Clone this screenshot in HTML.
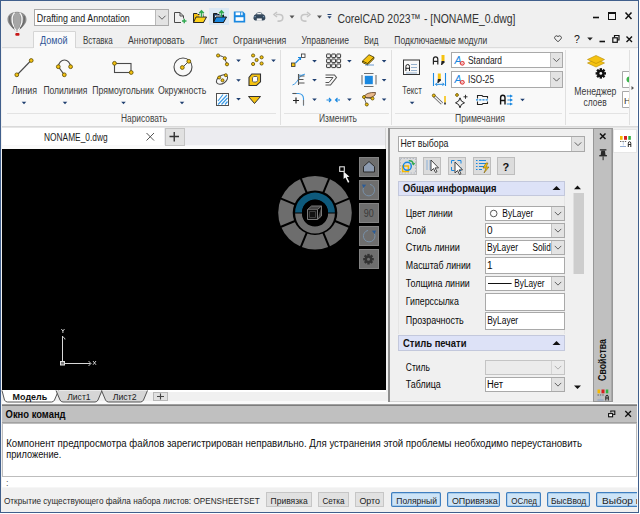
<!DOCTYPE html>
<html><head><meta charset="utf-8"><style>html,body{margin:0;padding:0;width:640px;height:514px;overflow:hidden;background:#fff}svg{display:block}text{font-family:"Liberation Sans",sans-serif}</style></head><body><svg width="640" height="514" viewBox="0 0 640 514" font-family="Liberation Sans, sans-serif"><rect x="0" y="0" width="640" height="514" fill="#ffffff" />
<rect x="0" y="0" width="639" height="513" fill="#f0f0f0" />
<rect x="0.5" y="0.5" width="638" height="512" fill="none" stroke="#405f8c" stroke-width="1"/>
<g><path d="M17 11.8C23.5 11.8 26.8 15.5 26.5 20C26.2 24.5 21 28.5 17.6 31.6H16.4C13 28.5 7.8 24.5 7.5 20C7.2 15.5 10.5 11.8 17 11.8Z" fill="#8c8c8c"/><path d="M17 12.2C20 12.2 21 17 20.6 21C20.3 25 18.6 28.5 17.3 31H16.7C15.4 28.5 13.7 25 13.4 21C13 17 14 12.2 17 12.2Z" fill="#a6a6a6"/><path d="M14.6 12.6C12.2 15 11.8 19 12.4 22.5C13 26 14.8 29 16.2 31" stroke="#fafafa" stroke-width="1.3" fill="none"/><path d="M19.6 12.6C22 15 22.4 19 21.8 22.5C21.2 26 19.4 29 17.8 31" stroke="#fafafa" stroke-width="1.3" fill="none"/><path d="M10 16C9 20 10.5 25 14 28.5" stroke="#6a6a6a" stroke-width="1.4" fill="none"/><path d="M24 16C25 20 23.5 25 20 28.5" stroke="#6a6a6a" stroke-width="1.4" fill="none"/><rect x="15.3" y="33" width="4.2" height="2.8" rx="1" fill="#c81818"/></g>
<rect x="34.5" y="9.5" width="134" height="16" fill="#ffffff" stroke="#a9a9a9" stroke-width="1"/>
<rect x="156" y="10" width="12" height="15" fill="#e3e3e3" />
<line x1="155.5" y1="10" x2="155.5" y2="25" stroke="#b9b9b9" stroke-width="1" />
<path d="M158.5 15.75l3.5 3.5l3.5 -3.5" fill="none" stroke="#606060" stroke-width="1" />
<text x="36.8" y="21.6" font-size="10.6" fill="#1a1a1a" textLength="93" lengthAdjust="spacingAndGlyphs" >Drafting and Annotation</text>
<path d="M174.5 12.5h5.5l3.5 3.5v6.5h-9z" fill="none" stroke="#4a4a4a" stroke-width="1" />
<path d="M180 12.5v3.5h3.5" fill="none" stroke="#4a4a4a" stroke-width="1" />
<rect x="181" y="18.5" width="6" height="5" fill="#f0f0f0" />
<path d="M182 21h4.5M184.25 18.75v4.5" fill="none" stroke="#2fa84f" stroke-width="1.4" />
<path d="M193.5 13.5h3.5l1 1h5.5v8h-10z" fill="#f5c211" stroke="#2a2a2a" stroke-width="1" />
<path d="M193.5 22.5l2.5-5.5h10.5l-3 5.5z" fill="#ffd21a" stroke="#2a2a2a" stroke-width="1" />
<rect x="199.5" y="12" width="4" height="4.5" fill="#f0f0f0" />
<path d="M201.5 17v-5.5M199.2 13.2l2.3-2.4 2.3 2.4" fill="none" stroke="#2fa84f" stroke-width="1.5" />
<rect x="209" y="8" width="20" height="17" fill="#dbe8f4" />
<path d="M213.5 13.5h3.5l1 1h5.5v8h-10z" fill="#1f3f66" stroke="#1a1a1a" stroke-width="1" />
<rect x="215" y="15.5" width="7" height="2" fill="#e8e8e8" />
<path d="M213.5 22.5l2.5-5.5h10.5l-3 5.5z" fill="#1a88e0" stroke="#1a1a1a" stroke-width="1" />
<rect x="219.5" y="12" width="4" height="3" fill="#dbe8f4" />
<path d="M221.5 17v-5.5M219.2 13.2l2.3-2.4 2.3 2.4" fill="none" stroke="#2fa84f" stroke-width="1.5" />
<path d="M233.8 11.5h9.2l2.2 2.2v8.7h-11.4z" fill="#1a88e0" />
<rect x="235.6" y="12.4" width="4.6" height="2.8" fill="#fff" />
<rect x="241.2" y="12.4" width="1.4" height="2.8" fill="#fff" />
<rect x="235.6" y="17.2" width="7.9" height="3.6" fill="#fff" />
<path d="M253.5 17.5q0-3 3-3.2h5.8q3 0.2 3 3.2v0.8q0 2.3-2.3 2.3h-7.2q-2.3 0-2.3-2.3z" fill="#34485c" />
<path d="M255.8 14.6q0.6-2.3 3.5-2.3t3.5 2.3z" fill="#34485c" />
<rect x="257.2" y="12.9" width="4.2" height="1.3" fill="#f4f4f4" />
<rect x="256.8" y="18.4" width="5" height="2.3" fill="#f4f4f4" />
<rect x="254.5" y="16.2" width="1.3" height="1" fill="#8fb0d0" />
<rect x="262.9" y="16.2" width="1.3" height="1" fill="#8fb0d0" />
<path d="M276 14.5h3.5a3.3 3.3 0 0 1 0 6.6h-2" fill="none" stroke="#c6c6c6" stroke-width="1.6" />
<path d="M277 12l-3 2.5 3 2.5" fill="none" stroke="#c6c6c6" stroke-width="1.6" />
<path d="M289.5 15.5h5l-2.5 3z" fill="#555" />
<path d="M308 14.5h-3.5a3.3 3.3 0 0 0 0 6.6h2" fill="none" stroke="#c6c6c6" stroke-width="1.6" />
<path d="M307 12l3 2.5-3 2.5" fill="none" stroke="#c6c6c6" stroke-width="1.6" />
<path d="M317.0 15.5h5l-2.5 3z" fill="#555" />
<line x1="327.5" y1="14.5" x2="331.5" y2="14.5" stroke="#1f3f70" stroke-width="1" />
<path d="M327.5 16.25h4l-2.0 2.5z" fill="#1f3f70" />
<text x="337.5" y="22.5" font-size="12.8" fill="#333" textLength="178" lengthAdjust="spacingAndGlyphs" >CorelCAD 2023™ - [NONAME_0.dwg]</text>
<line x1="593" y1="17.5" x2="599" y2="17.5" stroke="#111" stroke-width="1.6" />
<rect x="608.5" y="12.5" width="7" height="7" fill="none" stroke="#111" stroke-width="1"/>
<line x1="608.5" y1="13.5" x2="615.5" y2="13.5" stroke="#111" stroke-width="1" />
<path d="M625.5 12.5l6 6.5M631.5 12.5l-6 6.5" fill="none" stroke="#111" stroke-width="1.5" />
<rect x="33" y="31" width="43" height="18" fill="#fafafa" />
<path d="M33.5 49V31.5h42V49" fill="none" stroke="#d5d5d5" stroke-width="1" />
<text x="40" y="43.6" font-size="10.4" fill="#2f5597" textLength="27.5" lengthAdjust="spacingAndGlyphs" >Домой</text>
<text x="83" y="43.6" font-size="10.4" fill="#3a3a3a" textLength="29.7" lengthAdjust="spacingAndGlyphs" >Вставка</text>
<text x="128" y="43.6" font-size="10.4" fill="#3a3a3a" textLength="56.6" lengthAdjust="spacingAndGlyphs" >Аннотировать</text>
<text x="199.5" y="43.6" font-size="10.4" fill="#3a3a3a" textLength="18.3" lengthAdjust="spacingAndGlyphs" >Лист</text>
<text x="233" y="43.6" font-size="10.4" fill="#3a3a3a" textLength="53.3" lengthAdjust="spacingAndGlyphs" >Ограничения</text>
<text x="301.5" y="43.6" font-size="10.4" fill="#3a3a3a" textLength="47.5" lengthAdjust="spacingAndGlyphs" >Управление</text>
<text x="364" y="43.6" font-size="10.4" fill="#3a3a3a" textLength="14.5" lengthAdjust="spacingAndGlyphs" >Вид</text>
<text x="394.3" y="43.6" font-size="10.4" fill="#3a3a3a" textLength="93" lengthAdjust="spacingAndGlyphs" >Подключаемые модули</text>
<path d="M558 41.8l-3-3a1.8 1.8 0 0 1 3-2.2 1.8 1.8 0 0 1 3 2.2z" fill="none" stroke="#444" stroke-width="1" />
<text x="574" y="43" font-size="10.5" fill="#111" >?</text>
<path d="M587.25 37.5h5.5l-2.75 3z" fill="#222" />
<line x1="599.5" y1="41.5" x2="605" y2="41.5" stroke="#111" stroke-width="1.6" />
<rect x="612.8" y="37.8" width="4.5" height="4.5" fill="none" stroke="#111" stroke-width="1.2"/>
<path d="M614.5 37.5v-2h4.5v4.5h-1.7" fill="none" stroke="#111" stroke-width="1.2" />
<path d="M626.5 36.5l5.5 5.5M632 36.5l-5.5 5.5" fill="none" stroke="#111" stroke-width="1.4" />
<rect x="2" y="48" width="636" height="78" fill="#f9f9f9" />
<line x1="2" y1="47.7" x2="33" y2="47.7" stroke="#d8d8d8" stroke-width="1" />
<line x1="76" y1="47.7" x2="638" y2="47.7" stroke="#d8d8d8" stroke-width="1" />
<line x1="2" y1="126.5" x2="638" y2="126.5" stroke="#dadada" stroke-width="1" />
<line x1="280.5" y1="50" x2="280.5" y2="125" stroke="#e0e0e0" stroke-width="1" />
<line x1="391.5" y1="50" x2="391.5" y2="125" stroke="#e0e0e0" stroke-width="1" />
<line x1="565.5" y1="50" x2="565.5" y2="125" stroke="#e0e0e0" stroke-width="1" />
<line x1="7" y1="113.5" x2="276" y2="113.5" stroke="#e3e3e3" stroke-width="1" />
<line x1="284" y1="113.5" x2="389" y2="113.5" stroke="#e3e3e3" stroke-width="1" />
<line x1="395" y1="113.5" x2="562" y2="113.5" stroke="#e3e3e3" stroke-width="1" />
<line x1="569" y1="113.5" x2="628" y2="113.5" stroke="#e3e3e3" stroke-width="1" />
<line x1="629.5" y1="50" x2="629.5" y2="125" stroke="#e0e0e0" stroke-width="1" />
<path d="M631.5 86l2.5 2-2.5 2z" fill="#555" />
<line x1="17" y1="75" x2="31" y2="60.5" stroke="#4a4a4a" stroke-width="1.1" />
<circle cx="16.8" cy="74.8" r="1.9" fill="#f5c211" stroke="#5a4a00" stroke-width="0.8"/>
<circle cx="31.2" cy="60.5" r="1.9" fill="#f5c211" stroke="#5a4a00" stroke-width="0.8"/>
<text x="11.7" y="94.1" font-size="10" fill="#3a3a3a" textLength="25.3" lengthAdjust="spacingAndGlyphs" >Линия</text>
<path d="M21.7 101.7h4.6l-2.3 2.6z" fill="#1f3f70" />
<path d="M58.3 66.7 A6.2 7.6 0 0 1 70.6 66.7" fill="none" stroke="#4a4a4a" stroke-width="1.1" />
<line x1="58.3" y1="66.7" x2="64.3" y2="74.8" stroke="#4a4a4a" stroke-width="1.1" />
<circle cx="58.3" cy="66.7" r="1.9" fill="#f5c211" stroke="#5a4a00" stroke-width="0.8"/>
<circle cx="70.6" cy="66.7" r="1.9" fill="#f5c211" stroke="#5a4a00" stroke-width="0.8"/>
<circle cx="64.3" cy="74.8" r="1.9" fill="#f5c211" stroke="#5a4a00" stroke-width="0.8"/>
<text x="43.4" y="94.1" font-size="10" fill="#3a3a3a" textLength="44" lengthAdjust="spacingAndGlyphs" >Полилиния</text>
<path d="M62.7 101.7h4.6l-2.3 2.6z" fill="#1f3f70" />
<rect x="114.5" y="63.5" width="16.5" height="9" fill="none" stroke="#4a4a4a" stroke-width="1.1"/>
<circle cx="114.5" cy="63.3" r="1.9" fill="#f5c211" stroke="#5a4a00" stroke-width="0.8"/>
<circle cx="131.2" cy="72.5" r="1.9" fill="#f5c211" stroke="#5a4a00" stroke-width="0.8"/>
<text x="92.3" y="94.1" font-size="10" fill="#3a3a3a" textLength="61.5" lengthAdjust="spacingAndGlyphs" >Прямоугольник</text>
<path d="M121.2 101.7h4.6l-2.3 2.6z" fill="#1f3f70" />
<circle cx="183" cy="67" r="9" fill="none" stroke="#4a4a4a" stroke-width="1.1"/>
<line x1="182.5" y1="67.5" x2="188.5" y2="61.5" stroke="#4a4a4a" stroke-width="1" />
<circle cx="182.3" cy="67.5" r="1.9" fill="#f5c211" stroke="#5a4a00" stroke-width="0.8"/>
<circle cx="188.8" cy="61.3" r="1.9" fill="#f5c211" stroke="#5a4a00" stroke-width="0.8"/>
<text x="158" y="94.1" font-size="10" fill="#3a3a3a" textLength="48.3" lengthAdjust="spacingAndGlyphs" >Окружность</text>
<path d="M179.7 101.7h4.6l-2.3 2.6z" fill="#1f3f70" />
<text x="121" y="121.6" font-size="10" fill="#444" textLength="46" lengthAdjust="spacingAndGlyphs" >Нарисовать</text>
<path d="M218 55.5 Q224 56 225 59 T227 64.3" fill="none" stroke="#4a4a4a" stroke-width="1" />
<circle cx="218.1" cy="55.5" r="1.6" fill="#f5c211" stroke="#5a4a00" stroke-width="0.8"/>
<circle cx="224.8" cy="58.3" r="1.6" fill="#f5c211" stroke="#5a4a00" stroke-width="0.8"/>
<circle cx="227" cy="64.3" r="1.6" fill="#f5c211" stroke="#5a4a00" stroke-width="0.8"/>
<path d="M236.2 59.5h4.6l-2.3 2.6z" fill="#1f3f70" />
<ellipse cx="222" cy="79.5" rx="6.2" ry="4" transform="rotate(-35 222 79.5)" fill="none" stroke="#4a4a4a" stroke-width="1"/>
<circle cx="219.2" cy="77.5" r="1.5" fill="#f5c211" stroke="#5a4a00" stroke-width="0.8"/>
<circle cx="225.8" cy="75.2" r="1.5" fill="#f5c211" stroke="#5a4a00" stroke-width="0.8"/>
<circle cx="222.5" cy="80.3" r="1.5" fill="#f5c211" stroke="#5a4a00" stroke-width="0.8"/>
<path d="M236.2 79.2h4.6l-2.3 2.6z" fill="#1f3f70" />
<rect x="216.5" y="93.5" width="12" height="12" fill="#fff" stroke="#505050" stroke-width="1"/>
<path d="M218 101l5-6.5M218 104.5l9-9.5M221.5 104.5l6-6.5M225 104.5l2.5-3" fill="none" stroke="#3c9be6" stroke-width="1.2" />
<path d="M236.2 98.0h4.6l-2.3 2.6z" fill="#1f3f70" />
<circle cx="253.1" cy="55.5" r="1.6" fill="#f5c211" stroke="#5a4a00" stroke-width="0.8"/>
<circle cx="261.6" cy="57.3" r="1.6" fill="#f5c211" stroke="#5a4a00" stroke-width="0.8"/>
<circle cx="256.6" cy="60" r="1.6" fill="#f5c211" stroke="#5a4a00" stroke-width="0.8"/>
<circle cx="253.1" cy="64" r="1.6" fill="#f5c211" stroke="#5a4a00" stroke-width="0.8"/>
<circle cx="261.6" cy="63.5" r="1.6" fill="#f5c211" stroke="#5a4a00" stroke-width="0.8"/>
<path d="M271.2 59.5h4.6l-2.3 2.6z" fill="#1f3f70" />
<path d="M251.8 74h8.7v7.8l-4 3.7h-7.5v-8z" fill="#f5c211" stroke="#333" stroke-width="1.1" />
<path d="M252.5 77.8l1.3-1.3h3l0.8 0.8v3.4l-1.3 1.3h-3l-0.8-0.8z" fill="#fff" stroke="#555" stroke-width="0.9" />
<path d="M248.5 96.5h12l-6 7z" fill="#f5c211" stroke="#333" stroke-width="1" />
<rect x="291.5" y="63" width="3.5" height="3.5" fill="#f5c211" stroke="#333" stroke-width="0.8"/>
<rect x="301.5" y="54" width="3.5" height="3.5" fill="#fff" stroke="#333" stroke-width="0.8"/>
<path d="M295.5 63l5-5" fill="none" stroke="#1a88e0" stroke-width="1.1" />
<path d="M298 57.5h2.5v2.5" fill="none" stroke="#1a88e0" stroke-width="1.1" />
<path d="M312.2 59.900000000000006h4.6l-2.3 2.6z" fill="#1f3f70" />
<rect x="326.6" y="54" width="3.8" height="3.6" rx="0.5" fill="#f4f4f4" stroke="#3a3a3a" stroke-width="1"/>
<rect x="326.6" y="59" width="3.8" height="3.6" rx="0.5" fill="#f4f4f4" stroke="#3a3a3a" stroke-width="1"/>
<rect x="326.6" y="64" width="3.8" height="3.6" rx="0.5" fill="#f4f4f4" stroke="#3a3a3a" stroke-width="1"/>
<rect x="331.70000000000005" y="54" width="3.8" height="3.6" rx="0.5" fill="#f4f4f4" stroke="#3a3a3a" stroke-width="1"/>
<rect x="331.70000000000005" y="59" width="3.8" height="3.6" rx="0.5" fill="#f4f4f4" stroke="#3a3a3a" stroke-width="1"/>
<rect x="331.70000000000005" y="64" width="3.8" height="3.6" rx="0.5" fill="#f4f4f4" stroke="#3a3a3a" stroke-width="1"/>
<rect x="336.8" y="54" width="3.8" height="3.6" rx="0.5" fill="#f4f4f4" stroke="#3a3a3a" stroke-width="1"/>
<rect x="336.8" y="59" width="3.8" height="3.6" rx="0.5" fill="#f4f4f4" stroke="#3a3a3a" stroke-width="1"/>
<rect x="336.8" y="64" width="3.8" height="3.6" rx="0.5" fill="#f4f4f4" stroke="#3a3a3a" stroke-width="1"/>
<path d="M347.09999999999997 59.900000000000006h4.6l-2.3 2.6z" fill="#1f3f70" />
<path d="M362.5 61l6.5-6.3 5 2.5v1.5l-6.5 6.3-5-2.5z" fill="#f5c211" stroke="#3a3000" stroke-width="0.8" />
<path d="M362.5 61l5 2.5 6.5-6.3M367.5 63.5v1.5" fill="none" stroke="#3a3000" stroke-width="0.8" />
<line x1="365" y1="65" x2="374" y2="65" stroke="#6a9ad0" stroke-width="1" />
<path d="M381.8 59.900000000000006h4.6l-2.3 2.6z" fill="#1f3f70" />
<path d="M304.5 74.5C298 75.5 298.5 83 292.5 85" fill="none" stroke="#3c9be6" stroke-width="1" />
<path d="M298.5 74v11M298.5 76h6M298.5 79.5h5M298.5 83h6" fill="none" stroke="#555" stroke-width="1.1" />
<path d="M299 75q3 1 6-1" fill="none" stroke="#3c9be6" stroke-width="0.8" />
<path d="M312.2 79.0h4.6l-2.3 2.6z" fill="#1f3f70" />
<path d="M325.5 75h9l2 2.5-6 7.5h-5" fill="none" stroke="#555" stroke-width="1.1" />
<path d="M325.5 77.5h7.5l-4 5h-3.5" fill="none" stroke="#555" stroke-width="1" />
<rect x="364.8" y="75.8" width="8" height="8.4" fill="#1a88e0" />
<path d="M362 75v9.5M376 75v9.5M364 73.5h9.5M364 86.5h9.5" fill="none" stroke="#707070" stroke-width="1.1" />
<path d="M381.8 79.0h4.6l-2.3 2.6z" fill="#1f3f70" />
<path d="M292.5 93.5h6a5 5 0 0 1 5 5v7" fill="none" stroke="#3c9be6" stroke-width="1.1" />
<path d="M292.5 93.5h4" fill="none" stroke="#555" stroke-width="1.1" />
<path d="M303.5 100v5.5" fill="none" stroke="#777" stroke-width="1.1" />
<path d="M293 100.5h6M296 97.5v6" fill="none" stroke="#222" stroke-width="1.2" />
<path d="M312.2 98.5h4.6l-2.3 2.6z" fill="#1f3f70" />
<path d="M326.5 100h4.5M329 98l2 2-2 2M340 100h-4.5M337.5 98l-2 2 2 2" fill="none" stroke="#1a88e0" stroke-width="1.1" />
<path d="M347.09999999999997 98.5h4.6l-2.3 2.6z" fill="#1f3f70" />
<path d="M363.5 97q3-5 12-4.5l-0.5 2.5q-2 3-8 3z" fill="#e8b88a" stroke="#5a3a20" stroke-width="0.8" />
<path d="M364 97l2.5 7.5M364 97l7 1.5" fill="none" stroke="#444" stroke-width="0.8" />
<circle cx="364" cy="97" r="1.5" fill="#f5c211" stroke="#5a4a00" stroke-width="0.8"/>
<circle cx="366.8" cy="104.5" r="1.5" fill="#f5c211" stroke="#5a4a00" stroke-width="0.8"/>
<circle cx="372.5" cy="98.5" r="1.5" fill="#f5c211" stroke="#5a4a00" stroke-width="0.8"/>
<path d="M381.8 98.5h4.6l-2.3 2.6z" fill="#1f3f70" />
<text x="319" y="121.6" font-size="10" fill="#444" textLength="38" lengthAdjust="spacingAndGlyphs" >Изменить</text>
<rect x="403.5" y="60" width="16" height="14.5" fill="#f8f8f8" stroke="#333" stroke-width="1"/>
<path d="M405.9 71v-4.6q0-1.9 1.8-1.9t1.8 1.9v4.6M405.9 68.3h3.6" fill="none" stroke="#222" stroke-width="1" />
<path d="M411 64.5h6M411 67.5h6M411 70.5h6M406 73h11" fill="none" stroke="#8aa8c8" stroke-width="0.9" />
<text x="402.2" y="93.8" font-size="10" fill="#3a3a3a" textLength="19.6" lengthAdjust="spacingAndGlyphs" >Текст</text>
<path d="M409.8 101.7h4.6l-2.3 2.6z" fill="#1f3f70" />
<path d="M433.4 64.5v-5.3q0-2.3 2.2-2.3t2.2 2.3v5.3M433.4 61.3h4.4" fill="none" stroke="#222" stroke-width="1.2" />
<rect x="441.5" y="55" width="3" height="6" fill="#f5c211" />
<path d="M441.5 61h3v1.5l-2.5 2.5h-1z" fill="#222" />
<line x1="433.5" y1="73" x2="433.5" y2="86" stroke="#1a88e0" stroke-width="1.1" />
<line x1="445.5" y1="73" x2="445.5" y2="86" stroke="#1a88e0" stroke-width="1.1" />
<rect x="437.8" y="73.5" width="3" height="5.5" fill="#f5c211" />
<path d="M437.8 79h3v1.5l-2.5 2.5h-1z" fill="#222" />
<path d="M435.5 84.3h8.5M437 82.8l-1.5 1.5 1.5 1.5M442.5 82.8l1.5 1.5-1.5 1.5" fill="none" stroke="#1a88e0" stroke-width="1" />
<rect x="451.5" y="52.5" width="111" height="15" fill="#ffffff" stroke="#a9a9a9" stroke-width="1"/>
<rect x="551" y="53" width="11" height="14" fill="#e3e3e3" />
<line x1="550.5" y1="53" x2="550.5" y2="67" stroke="#c0c0c0" stroke-width="1" />
<path d="M553.25 58.375l3.25 3.25l3.25 -3.25" fill="none" stroke="#606060" stroke-width="1" />
<text x="454.5" y="64" font-size="10.5" font-style="italic" fill="#1a88e0">A</text>
<circle cx="462.3" cy="63.3" r="2.4" fill="#e04040"/>
<circle cx="462.3" cy="63.3" r="1.2" fill="#fff"/>
<line x1="461.4" y1="64.2" x2="463.2" y2="62.4" stroke="#e04040" stroke-width="0.7" />
<text x="468" y="64.1" font-size="10.3" fill="#222" textLength="34" lengthAdjust="spacingAndGlyphs" >Standard</text>
<rect x="451.5" y="71.5" width="111" height="16" fill="#ffffff" stroke="#a9a9a9" stroke-width="1"/>
<rect x="551" y="72" width="11" height="15" fill="#e3e3e3" />
<line x1="550.5" y1="72" x2="550.5" y2="87" stroke="#c0c0c0" stroke-width="1" />
<path d="M553.25 77.875l3.25 3.25l3.25 -3.25" fill="none" stroke="#606060" stroke-width="1" />
<text x="454.5" y="83" font-size="10.5" font-style="italic" fill="#1a88e0">A</text>
<circle cx="462.3" cy="82.3" r="2.4" fill="#e04040"/>
<circle cx="462.3" cy="82.3" r="1.2" fill="#fff"/>
<line x1="461.4" y1="83.2" x2="463.2" y2="81.4" stroke="#e04040" stroke-width="0.7" />
<text x="468" y="83.1" font-size="10.3" fill="#222" textLength="26" lengthAdjust="spacingAndGlyphs" >ISO-25</text>
<path d="M434 96l8 7.5" fill="none" stroke="#555" stroke-width="3" />
<path d="M434 96l8 7.5" fill="none" stroke="#f4f4f4" stroke-width="1.6" />
<circle cx="433.8" cy="95.5" r="1.5" fill="#f5c211" stroke="#5a4a00" stroke-width="0.8"/>
<rect x="444.2" y="96" width="1.6" height="6.5" fill="#f5c211" />
<rect x="444.2" y="102.5" width="1.6" height="2" fill="#222" />
<circle cx="457" cy="95" r="1.4" fill="#f5c211" stroke="#5a4a00" stroke-width="0.8"/>
<path d="M460 97.8q0.5 4 4.5 5-4 1-4.5 5-0.5-4-4.5-5 4-1 4.5-5z" fill="none" stroke="#222" stroke-width="1" />
<path d="M465.5 94.8v4M463.5 96.8h4" fill="none" stroke="#222" stroke-width="0.9" />
<path d="M477.5 98.5v-3h4.5l1 1h4.5v2M477.5 101.5v3h4.5l1-1h4.5v-2" fill="none" stroke="#222" stroke-width="1.1" />
<path d="M476 99.8h12" fill="none" stroke="#1a88e0" stroke-width="1.2" stroke-dasharray="2.2 1"/>
<path d="M500.6 104.5v-6.8q0-2.5 2.2-2.5t2.2 2.5v6.8M500.6 100.5h4.4" fill="none" stroke="#111" stroke-width="1.4" />
<path d="M506.8 96h3.2M507.5 100h2.5M506.8 104h3.2" fill="none" stroke="#1a88e0" stroke-width="1.2" />
<path d="M510 94.6l3 1.4-3 1.8zM510 98.3l3 1.7-3 1.7zM510 102.4l3 1.6-3 1.6z" fill="#1a88e0" />
<path d="M520.2 98.7h4.6l-2.3 2.6z" fill="#1f3f70" />
<text x="455" y="121.6" font-size="10" fill="#444" textLength="50" lengthAdjust="spacingAndGlyphs" >Примечания</text>
<path d="M587.5 63l8.5-4 8.5 4-8.5 4z" fill="#f5c211" stroke="#b58a00" stroke-width="0.6" />
<path d="M587.5 59.5l8.5-4 8.5 4-8.5 4z" fill="#f5c211" stroke="#b58a00" stroke-width="0.6" />
<g transform="translate(600.8 73.4)"><circle r="3.7" fill="#111"/><circle r="1.4" fill="#f9f9f9"/><rect x="-1.2" y="-5.2" width="2.4" height="2.6" fill="#111" transform="rotate(0)"/><rect x="-1.2" y="-5.2" width="2.4" height="2.6" fill="#111" transform="rotate(45)"/><rect x="-1.2" y="-5.2" width="2.4" height="2.6" fill="#111" transform="rotate(90)"/><rect x="-1.2" y="-5.2" width="2.4" height="2.6" fill="#111" transform="rotate(135)"/><rect x="-1.2" y="-5.2" width="2.4" height="2.6" fill="#111" transform="rotate(180)"/><rect x="-1.2" y="-5.2" width="2.4" height="2.6" fill="#111" transform="rotate(225)"/><rect x="-1.2" y="-5.2" width="2.4" height="2.6" fill="#111" transform="rotate(270)"/><rect x="-1.2" y="-5.2" width="2.4" height="2.6" fill="#111" transform="rotate(315)"/></g>
<text x="574.3" y="94.7" font-size="10" fill="#3a3a3a" textLength="42" lengthAdjust="spacingAndGlyphs" >Менеджер</text>
<text x="583.6" y="105.5" font-size="10" fill="#3a3a3a" textLength="23" lengthAdjust="spacingAndGlyphs" >слоев</text>
<path d="M629 71.5h-6.5v16h6.5" fill="#fff" stroke="#a9a9a9" stroke-width="1" />
<circle cx="629.5" cy="79.5" r="3" fill="#3cb44b"/>
<path d="M629 91.5h-6.5v16h6.5" fill="#fff" stroke="#a9a9a9" stroke-width="1" />
<text x="624" y="103.5" font-size="9" fill="#333" >Н</text>
<rect x="629.6" y="49" width="8.4" height="77" fill="#f9f9f9" />
<line x1="629.5" y1="50" x2="629.5" y2="125" stroke="#e0e0e0" stroke-width="1" />
<path d="M631.5 86l2.5 2-2.5 2z" fill="#555" />
<line x1="637.5" y1="48" x2="637.5" y2="126" stroke="#ffffff" stroke-width="1" />
<rect x="2" y="127" width="636" height="1.5" fill="#e6e6e6" />
<rect x="2" y="128" width="384" height="21" fill="#ececf0" />
<rect x="2" y="128" width="162" height="17.5" fill="#ffffff" />
<rect x="2" y="145.3" width="384" height="3.7" fill="#fbfbfb" />
<text x="44" y="140.8" font-size="10.4" fill="#1a1a1a" textLength="63.6" lengthAdjust="spacingAndGlyphs" >NONAME_0.dwg</text>
<path d="M146.5 133l7.5 7.5M154 133l-7.5 7.5" fill="none" stroke="#555" stroke-width="1" />
<rect x="165.5" y="128.5" width="19" height="17" fill="#e1e1e1" stroke="#c4c4c4" stroke-width="1"/>
<path d="M169.5 136.5h9.5M174.25 132v9.5" fill="none" stroke="#333" stroke-width="1.4" />
<line x1="385.5" y1="128" x2="385.5" y2="149" stroke="#d6d6d6" stroke-width="1" />
<rect x="2" y="149" width="384" height="241" fill="#000000" />
<circle cx="315" cy="212.7" r="36.8" fill="#6d6d6d"/>
<circle cx="315" cy="212.7" r="22.3" fill="#000"/>
<line x1="323.04" y1="193.3" x2="329.54" y2="177.59" stroke="#000" stroke-width="2" />
<line x1="334.4" y1="204.66" x2="350.11" y2="198.16" stroke="#000" stroke-width="2" />
<line x1="334.4" y1="220.74" x2="350.11" y2="227.24" stroke="#000" stroke-width="2" />
<line x1="323.04" y1="232.1" x2="329.54" y2="247.81" stroke="#000" stroke-width="2" />
<line x1="306.96" y1="232.1" x2="300.46" y2="247.81" stroke="#000" stroke-width="2" />
<line x1="295.6" y1="220.74" x2="279.89" y2="227.24" stroke="#000" stroke-width="2" />
<line x1="295.6" y1="204.66" x2="279.89" y2="198.16" stroke="#000" stroke-width="2" />
<line x1="306.96" y1="193.3" x2="300.46" y2="177.59" stroke="#000" stroke-width="2" />
<path d="M295.1 212.5 A19.9 19.9 0 0 1 334.9 212.5 L328 212.5 A13 13 0 0 0 302 212.5 Z" fill="#0e5a7c"/>
<path d="M295.1 213.6 A19.9 19.9 0 0 0 334.9 213.6 L328 213.6 A13 13 0 0 1 302 213.6 Z" fill="#6d6d6d"/>
<circle cx="315" cy="212.7" r="13" fill="#000"/>
<path d="M307.5 209.5h10v10h-10z" fill="#111" stroke="#7a7a7a" stroke-width="1" />
<path d="M307.5 209.5l4-3.5h10l-4 3.5M317.5 219.5l4-3.5v-10" fill="#444" stroke="#7a7a7a" stroke-width="1" />
<path d="M309.5 211.5h6v6h-6z" fill="#111" stroke="#4a4a4a" stroke-width="0.8" />
<rect x="339.7" y="166.8" width="4.6" height="4.6" fill="none" stroke="#e0e0e0" stroke-width="1.1"/>
<path d="M343.6 171.5v7.5l1.8-1.6 2.6 5.3 1.4-0.7-2.5-5.1 2.6-0.2z" fill="#f4f4f4" />
<rect x="359.5" y="157.5" width="19" height="19" fill="#6e6e6e" stroke="#838383" stroke-width="1"/>
<rect x="359.5" y="180.5" width="19" height="19" fill="#6e6e6e" stroke="#838383" stroke-width="1"/>
<rect x="359.5" y="203.5" width="19" height="19" fill="#6e6e6e" stroke="#838383" stroke-width="1"/>
<rect x="359.5" y="226.5" width="19" height="19" fill="#6e6e6e" stroke="#838383" stroke-width="1"/>
<rect x="359.5" y="249.5" width="19" height="19" fill="#6e6e6e" stroke="#838383" stroke-width="1"/>
<path d="M363.5 166.5l5.5-5 5.5 5v5.5h-11z" fill="#8d9bb0" stroke="#2a2a2a" stroke-width="1" />
<path d="M363.6 187.5A5.8 5.8 0 1 0 370 184.4" fill="none" stroke="#7890a8" stroke-width="1" />
<path d="M362 184.5l4.2 0.3-2.8 3.2z" fill="#2a5c98" />
<text x="363.7" y="216.6" font-size="10" fill="#3a3a3a" textLength="10" lengthAdjust="spacingAndGlyphs" >90</text>
<path d="M374.4 233.5A5.8 5.8 0 1 1 368 230.4" fill="none" stroke="#7890a8" stroke-width="1" />
<path d="M376 230.5l-4.2 0.3 2.8 3.2z" fill="#2a5c98" />
<g transform="translate(368.5 259.2)"><circle r="3.7" fill="#333"/><circle r="1.5" fill="#6e6e6e"/><rect x="-1.2" y="-5.3" width="2.4" height="2.6" fill="#333" transform="rotate(0)"/><rect x="-1.2" y="-5.3" width="2.4" height="2.6" fill="#333" transform="rotate(45)"/><rect x="-1.2" y="-5.3" width="2.4" height="2.6" fill="#333" transform="rotate(90)"/><rect x="-1.2" y="-5.3" width="2.4" height="2.6" fill="#333" transform="rotate(135)"/><rect x="-1.2" y="-5.3" width="2.4" height="2.6" fill="#333" transform="rotate(180)"/><rect x="-1.2" y="-5.3" width="2.4" height="2.6" fill="#333" transform="rotate(225)"/><rect x="-1.2" y="-5.3" width="2.4" height="2.6" fill="#333" transform="rotate(270)"/><rect x="-1.2" y="-5.3" width="2.4" height="2.6" fill="#333" transform="rotate(315)"/></g>
<path d="M62.5 336v27.5h28" fill="none" stroke="#d8d8d8" stroke-width="1" />
<rect x="60.5" y="361.5" width="4" height="3.5" fill="#777" stroke="#e0e0e0" stroke-width="1"/>
<path d="M62.5 336.5l2 1.5 0.5 1.5M88.5 361l2.5 2.5-2.5 2.5" fill="none" stroke="#d8d8d8" stroke-width="0.9" />
<path d="M61.3 329l1.6 2 1.6-2M62.9 331v2" fill="none" stroke="#e0e0e0" stroke-width="0.9" />
<path d="M93 361l3 3.8M96 361l-3 3.8" fill="none" stroke="#e0e0e0" stroke-width="0.9" />
<rect x="2" y="390" width="384" height="2" fill="#ffffff" />
<rect x="2" y="392" width="384" height="9" fill="#f0f0f0" />
<rect x="2" y="401" width="636" height="3.5" fill="#fafafa" />
<path d="M58.5 390.5l-4 9.5q-1 2-3 2h-44q-2 0-3-2l-2.5-9.5" fill="#fff" stroke="#444" stroke-width="0.9" />
<text x="12.6" y="399.8" font-size="9.2" fill="#111" font-weight="bold" textLength="34.6" lengthAdjust="spacingAndGlyphs" >Модель</text>
<path d="M56 390.5l4 9.5q1 2 3 2h32q2 0 3-2l4-9.5" fill="#d6d6d6" stroke="#444" stroke-width="0.9" />
<text x="67.2" y="399.8" font-size="9.2" fill="#222" textLength="23.4" lengthAdjust="spacingAndGlyphs" >Лист1</text>
<path d="M101.5 390.5l4 9.5q1 2 3 2h32q2 0 3-2l4-9.5" fill="#d6d6d6" stroke="#444" stroke-width="0.9" />
<text x="112.7" y="399.8" font-size="9.2" fill="#222" textLength="23.9" lengthAdjust="spacingAndGlyphs" >Лист2</text>
<rect x="153.5" y="392.5" width="14" height="8" fill="#e1e1e1" stroke="#b8b8b8" stroke-width="1"/>
<path d="M157 396.5h7M160.5 393.5v6" fill="none" stroke="#444" stroke-width="1.1" />
<rect x="386" y="128" width="2" height="273" fill="#f0f0f0" />
<rect x="388" y="128" width="2" height="274" fill="#8e8e8e" />
<rect x="390" y="128" width="203.5" height="273" fill="#f0f0f0" />
<line x1="390" y1="401.5" x2="593" y2="401.5" stroke="#d4d4d4" stroke-width="1" />
<line x1="390" y1="128.5" x2="593" y2="128.5" stroke="#a8a8a8" stroke-width="1" />
<rect x="398.5" y="136.5" width="186" height="15" fill="#ffffff" stroke="#a9a9a9" stroke-width="1"/>
<rect x="572" y="137" width="12" height="14" fill="#e3e3e3" />
<line x1="571.5" y1="137" x2="571.5" y2="151" stroke="#c0c0c0" stroke-width="1" />
<path d="M574.75 142.375l3.25 3.25l3.25 -3.25" fill="none" stroke="#606060" stroke-width="1" />
<text x="400.5" y="147.4" font-size="10.3" fill="#1a1a1a" textLength="48" lengthAdjust="spacingAndGlyphs" >Нет выбора</text>
<rect x="399.5" y="157.5" width="17" height="17" fill="#dcdcdc" stroke="#bdbdbd" stroke-width="1"/>
<rect x="423.5" y="157.5" width="17" height="17" fill="#dcdcdc" stroke="#bdbdbd" stroke-width="1"/>
<rect x="448.5" y="157.5" width="17" height="17" fill="#dcdcdc" stroke="#bdbdbd" stroke-width="1"/>
<rect x="473.5" y="157.5" width="17" height="17" fill="#dcdcdc" stroke="#bdbdbd" stroke-width="1"/>
<rect x="497.5" y="157.5" width="17" height="17" fill="#dcdcdc" stroke="#bdbdbd" stroke-width="1"/>
<rect x="400.5" y="158.5" width="15" height="14.5" fill="none" stroke="#a8b0c0" stroke-width="0.8" stroke-dasharray="1.5 1.5"/>
<rect x="402.6" y="166" width="5.8" height="5.5" fill="none" stroke="#f5b800" stroke-width="1.5"/>
<circle cx="407.3" cy="166.3" r="4" fill="none" stroke="#1a88e0" stroke-width="1.5"/>
<path d="M408.8 160.8q3.5-0.5 4.5 2.8" fill="none" stroke="#2fa84f" stroke-width="1.5" />
<path d="M411.3 163.3l2.2 2.2 2-2.6z" fill="#2fa84f" />
<path d="M427 160v10M430 160v10" fill="none" stroke="#8ab0d8" stroke-width="1" />
<path d="M431 160v11l2.5-2.5 2 4 1.5-.8-2-3.8h3.5z" fill="#fff" stroke="#333" stroke-width="0.9" />
<path d="M451.5 160.5h3M457.5 160.5h3.5v3M451.5 160.5v3M451.5 167v3.5h3M458 170.5h3v-3" fill="none" stroke="#1a88e0" stroke-width="1" />
<path d="M455 162v11l2.5-2.5 2 4 1.5-.8-2-3.8h3.5z" fill="#fff" stroke="#333" stroke-width="0.9" />
<path d="M476 160.5h1.5M479 160.5h7M476 163.5h1.5M479 163.5h7M476 166.5h1.5M479 166.5h5M476 169.5h1.5M479 169.5h3" fill="none" stroke="#1a88e0" stroke-width="1" />
<path d="M486 163l-3 5h3l-2 5 5-6h-3l2-4z" fill="#f5c211" stroke="#6a5000" stroke-width="0.5" />
<text x="502.5" y="170.5" font-size="11" fill="#111" font-weight="bold" >?</text>
<rect x="398.5" y="181.5" width="166" height="14" fill="#dde2f7" stroke="#c3c8dc" stroke-width="1"/>
<text x="403" y="191.6" font-size="10.3" fill="#111" font-weight="bold" textLength="93.5" lengthAdjust="spacingAndGlyphs" >Общая информация</text>
<path d="M552.5 190h8l-4-4z" fill="#111" />
<rect x="398" y="196" width="167" height="138" fill="#f0f0f0" />
<line x1="398.5" y1="196" x2="398.5" y2="334" stroke="#e4e4e4" stroke-width="1" />
<line x1="564.5" y1="196" x2="564.5" y2="334" stroke="#e4e4e4" stroke-width="1" />
<text x="405.8" y="216.8" font-size="10" fill="#0a0a0a" textLength="47" lengthAdjust="spacingAndGlyphs" >Цвет линии</text>
<rect x="485.5" y="206.5" width="79" height="14" fill="#ffffff" stroke="#a9a9a9" stroke-width="1"/>
<rect x="552" y="207" width="12" height="13" fill="#e3e3e3" />
<line x1="551.5" y1="207" x2="551.5" y2="220" stroke="#c0c0c0" stroke-width="1" />
<path d="M554.75 211.875l3.25 3.25l3.25 -3.25" fill="none" stroke="#606060" stroke-width="1" />
<circle cx="493.7" cy="213.5" r="3.3" fill="#fff" stroke="#444" stroke-width="0.9"/>
<text x="502.3" y="216.8" font-size="10" fill="#0a0a0a" textLength="31" lengthAdjust="spacingAndGlyphs" >ByLayer</text>
<text x="405.8" y="233.8" font-size="10" fill="#0a0a0a" textLength="20" lengthAdjust="spacingAndGlyphs" >Слой</text>
<rect x="485.5" y="223.5" width="79" height="14" fill="#ffffff" stroke="#a9a9a9" stroke-width="1"/>
<rect x="552" y="224" width="12" height="13" fill="#e3e3e3" />
<line x1="551.5" y1="224" x2="551.5" y2="237" stroke="#c0c0c0" stroke-width="1" />
<path d="M554.75 228.875l3.25 3.25l3.25 -3.25" fill="none" stroke="#606060" stroke-width="1" />
<text x="487" y="233.8" font-size="10" fill="#0a0a0a" >0</text>
<text x="405.8" y="250.8" font-size="10" fill="#0a0a0a" textLength="54" lengthAdjust="spacingAndGlyphs" >Стиль линии</text>
<rect x="485.5" y="240.5" width="79" height="14" fill="#ffffff" stroke="#a9a9a9" stroke-width="1"/>
<rect x="552" y="241" width="12" height="13" fill="#e3e3e3" />
<line x1="551.5" y1="241" x2="551.5" y2="254" stroke="#c0c0c0" stroke-width="1" />
<path d="M554.75 245.875l3.25 3.25l3.25 -3.25" fill="none" stroke="#606060" stroke-width="1" />
<text x="487" y="250.8" font-size="10" fill="#0a0a0a" textLength="31" lengthAdjust="spacingAndGlyphs" >ByLayer</text>
<text x="532.4" y="250.8" font-size="10" fill="#0a0a0a" textLength="18.4" lengthAdjust="spacingAndGlyphs" >Solid</text>
<text x="405.8" y="268.8" font-size="10" fill="#0a0a0a" textLength="65" lengthAdjust="spacingAndGlyphs" >Масштаб линии</text>
<rect x="485.5" y="257.5" width="79" height="16" fill="#ffffff" stroke="#a9a9a9" stroke-width="1"/>
<text x="487" y="268.8" font-size="10" fill="#0a0a0a" >1</text>
<text x="405.8" y="286.8" font-size="10" fill="#0a0a0a" textLength="64" lengthAdjust="spacingAndGlyphs" >Толщина линии</text>
<rect x="485.5" y="276.5" width="79" height="14" fill="#ffffff" stroke="#a9a9a9" stroke-width="1"/>
<rect x="552" y="277" width="12" height="13" fill="#e3e3e3" />
<line x1="551.5" y1="277" x2="551.5" y2="290" stroke="#c0c0c0" stroke-width="1" />
<path d="M554.75 281.875l3.25 3.25l3.25 -3.25" fill="none" stroke="#606060" stroke-width="1" />
<line x1="488" y1="283.5" x2="511.6" y2="283.5" stroke="#111" stroke-width="1" />
<text x="514.3" y="286.8" font-size="10" fill="#0a0a0a" textLength="30.3" lengthAdjust="spacingAndGlyphs" >ByLayer</text>
<text x="405.8" y="304.8" font-size="10" fill="#0a0a0a" textLength="53" lengthAdjust="spacingAndGlyphs" >Гиперссылка</text>
<rect x="485.5" y="293.5" width="79" height="17" fill="#ffffff" stroke="#a9a9a9" stroke-width="1"/>
<text x="405.8" y="323.8" font-size="10" fill="#0a0a0a" textLength="58" lengthAdjust="spacingAndGlyphs" >Прозрачность</text>
<rect x="485.5" y="312.5" width="79" height="17" fill="#ffffff" stroke="#a9a9a9" stroke-width="1"/>
<text x="487.2" y="323.8" font-size="10" fill="#0a0a0a" textLength="31" lengthAdjust="spacingAndGlyphs" >ByLayer</text>
<rect x="398.5" y="335.5" width="166" height="15" fill="#dde2f7" stroke="#c3c8dc" stroke-width="1"/>
<text x="403" y="346.6" font-size="10.3" fill="#111" font-weight="bold" textLength="63.5" lengthAdjust="spacingAndGlyphs" >Стиль печати</text>
<path d="M552.5 345h8l-4-4z" fill="#111" />
<text x="405.8" y="371" font-size="10" fill="#0a0a0a" textLength="24" lengthAdjust="spacingAndGlyphs" >Стиль</text>
<rect x="485.5" y="360.5" width="79" height="14" fill="#ebebeb" stroke="#c4c4c4" stroke-width="1"/>
<path d="M554.75 365.875l3.25 3.25l3.25 -3.25" fill="none" stroke="#b0b0b0" stroke-width="1" />
<line x1="551.5" y1="361" x2="551.5" y2="374" stroke="#d4d4d4" stroke-width="1" />
<text x="405.8" y="387.5" font-size="10" fill="#0a0a0a" textLength="35" lengthAdjust="spacingAndGlyphs" >Таблица</text>
<rect x="485.5" y="377.5" width="79" height="14" fill="#ffffff" stroke="#a9a9a9" stroke-width="1"/>
<rect x="552" y="378" width="12" height="13" fill="#e3e3e3" />
<line x1="551.5" y1="378" x2="551.5" y2="391" stroke="#c0c0c0" stroke-width="1" />
<path d="M554.75 382.875l3.25 3.25l3.25 -3.25" fill="none" stroke="#606060" stroke-width="1" />
<text x="487" y="388" font-size="10" fill="#0a0a0a" textLength="16" lengthAdjust="spacingAndGlyphs" >Нет</text>
<path d="M574 189.3h7l-3.5-3.8z" fill="#111" />
<rect x="573.5" y="193" width="10.5" height="81" fill="#cdcdcd" />
<path d="M574 385.5h7l-3.5 3.5z" fill="#111" />
<rect x="593.5" y="128.5" width="19" height="273" fill="#c0c0c0" stroke="#979797" stroke-width="1"/>
<line x1="611.5" y1="129" x2="611.5" y2="401" stroke="#a8a8a8" stroke-width="1" />
<path d="M600 133.5l5.5 5.5M605.5 133.5l-5.5 5.5" fill="none" stroke="#111" stroke-width="1.5" />
<rect x="599.8" y="149.2" width="6.6" height="1.3" fill="#2a2a2a" />
<path d="M601.3 150.5h3.6l0.6 4.5h-4.8z" fill="#2a2a2a" />
<rect x="599.3" y="155" width="7.6" height="1.4" fill="#2a2a2a" />
<rect x="602.6" y="156.4" width="1" height="3.8" fill="#2a2a2a" />
<text x="0" y="0" font-size="10" font-weight="bold" fill="#111" textLength="42" lengthAdjust="spacingAndGlyphs" transform="translate(606.3 381) rotate(-90)">Свойства</text>
<rect x="597.5" y="389.5" width="2.6" height="3.8" fill="#f5b800" />
<rect x="601.5" y="389.5" width="3" height="3.8" fill="#d42020" />
<rect x="605.8" y="389.5" width="2.5" height="3.8" fill="#30b040" />
<path d="M597.5 395.0h1.4M599.9 395.0h1.4M602.3 395.0h1.4" fill="none" stroke="#444" stroke-width="0.8" />
<path d="M600.8 395.5v3.5" fill="none" stroke="#9ab8e0" stroke-width="0.6" />
<line x1="597.5" y1="400.0" x2="603.5" y2="400.0" stroke="#7a98c8" stroke-width="0.8" />
<path d="M605.8 400.5v-3.5q0-1.8 1.25-1.8t1.25 1.8v3.5M605.8 398.0h2.5" fill="none" stroke="#111" stroke-width="0.9" />
<rect x="613" y="128" width="25" height="275" fill="#f0f0f0" />
<rect x="613.5" y="129.5" width="23" height="23" fill="#ffffff" stroke="#e6e6e6" stroke-width="1"/>
<rect x="620" y="136" width="2.6" height="3.8" fill="#f5b800" />
<rect x="624" y="136" width="3" height="3.8" fill="#d42020" />
<rect x="628.3" y="136" width="2.5" height="3.8" fill="#30b040" />
<path d="M620 141.5h1.4M622.4 141.5h1.4M624.8 141.5h1.4" fill="none" stroke="#444" stroke-width="0.8" />
<path d="M623.3 142v3.5" fill="none" stroke="#9ab8e0" stroke-width="0.6" />
<line x1="620" y1="146.5" x2="626" y2="146.5" stroke="#7a98c8" stroke-width="0.8" />
<path d="M628.3 147v-3.5q0-1.8 1.25-1.8t1.25 1.8v3.5M628.3 144.5h2.5" fill="none" stroke="#111" stroke-width="0.9" />
<rect x="2" y="404.3" width="635" height="1.7" fill="#7c7c7c" />
<rect x="2" y="406" width="635" height="16" fill="#c0c0c0" />
<rect x="2" y="422" width="635" height="1.4" fill="#a2a2a2" />
<text x="5.6" y="418" font-size="10" fill="#0a0a0a" font-weight="bold" textLength="60" lengthAdjust="spacingAndGlyphs" >Окно команд</text>
<path d="M610.8 412.6v-1.6h4v3.5h-1.6" fill="none" stroke="#111" stroke-width="1.1" />
<rect x="608.6" y="413.6" width="4" height="3.2" fill="#fff" stroke="#111" stroke-width="1.1"/>
<path d="M625.3 411l5.7 5.7M631 411l-5.7 5.7" fill="none" stroke="#111" stroke-width="1.3" />
<rect x="2.5" y="423.5" width="634" height="53" fill="#ffffff" stroke="#bdbdbd" stroke-width="1"/>
<rect x="637" y="404" width="1" height="84" fill="#fafafa" />
<text x="6.25" y="447" font-size="10" fill="#111" textLength="575.8" lengthAdjust="spacingAndGlyphs" >Компонент предпросмотра файлов зарегистрирован неправильно. Для устранения этой проблемы необходимо переустановить</text>
<text x="6.25" y="457.6" font-size="10" fill="#111" textLength="55" lengthAdjust="spacingAndGlyphs" >приложение.</text>
<rect x="2" y="477" width="636" height="10.5" fill="#ffffff" />
<text x="6" y="486" font-size="9" fill="#555" >:</text>
<rect x="1" y="488" width="637" height="24" fill="#f0f0f0" />
<line x1="2" y1="487.5" x2="637" y2="487.5" stroke="#f6f6f6" stroke-width="1" />
<text x="4" y="504" font-size="9.4" fill="#2a2a2a" textLength="255.8" lengthAdjust="spacingAndGlyphs" >Открытие существующего файла набора листов: OPENSHEETSET</text>
<rect x="266.5" y="492.5" width="45" height="14" fill="#e1e1e1" stroke="#c6c6c6" stroke-width="1"/>
<text x="270.6" y="503.8" font-size="9" fill="#222" textLength="37.1" lengthAdjust="spacingAndGlyphs" >Привязка</text>
<rect x="318.5" y="492.5" width="30" height="14" fill="#e1e1e1" stroke="#c6c6c6" stroke-width="1"/>
<text x="322.5" y="503.8" font-size="9" fill="#222" textLength="21.9" lengthAdjust="spacingAndGlyphs" >Сетка</text>
<rect x="355.5" y="492.5" width="28" height="14" fill="#e1e1e1" stroke="#c6c6c6" stroke-width="1"/>
<text x="359.4" y="503.8" font-size="9" fill="#222" textLength="20.6" lengthAdjust="spacingAndGlyphs" >Орто</text>
<rect x="391.6" y="492.6" width="48.8" height="13.8" rx="1.2" fill="#cde4f7" stroke="#3f7fc0" stroke-width="1.2"/>
<text x="396.3" y="503.8" font-size="9" fill="#222" textLength="40.7" lengthAdjust="spacingAndGlyphs" >Полярный</text>
<rect x="447.6" y="492.6" width="51.8" height="13.8" rx="1.2" fill="#cde4f7" stroke="#3f7fc0" stroke-width="1.2"/>
<text x="451.9" y="503.8" font-size="9" fill="#222" textLength="45.9" lengthAdjust="spacingAndGlyphs" >ОПривязка</text>
<rect x="506.6" y="492.6" width="33.8" height="13.8" rx="1.2" fill="#cde4f7" stroke="#3f7fc0" stroke-width="1.2"/>
<text x="511.25" y="503.8" font-size="9" fill="#222" textLength="25.6" lengthAdjust="spacingAndGlyphs" >ОСлед</text>
<rect x="547.6" y="492.6" width="41.8" height="13.8" rx="1.2" fill="#cde4f7" stroke="#3f7fc0" stroke-width="1.2"/>
<text x="551" y="503.8" font-size="9" fill="#222" textLength="35.25" lengthAdjust="spacingAndGlyphs" >БысВвод</text>
<rect x="596.6" y="492.6" width="52.8" height="13.8" rx="1.2" fill="#cde4f7" stroke="#3f7fc0" stroke-width="1.2"/>
<text x="601.9" y="503.8" font-size="9" fill="#222" textLength="45" lengthAdjust="spacingAndGlyphs" >Выбор цв</text>
<rect x="637" y="488" width="3" height="26" fill="#ffffff" />
<rect x="637" y="488" width="1" height="24" fill="#f7f7f7" />
<line x1="638.5" y1="470" x2="638.5" y2="513" stroke="#405f8c" stroke-width="1" />
<line x1="0" y1="512.5" x2="639" y2="512.5" stroke="#405f8c" stroke-width="1" /></svg></body></html>
